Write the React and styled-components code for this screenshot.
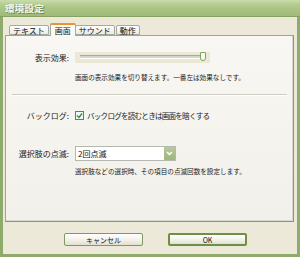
import React from "react";
import styled, { createGlobalStyle } from "styled-components";

const Global = createGlobalStyle`
  html, body { margin: 0; padding: 0; background: #ece9d8; }
  body { font-family: "Noto Sans CJK JP", "Noto Sans", sans-serif; }
`;

const Window = styled.div`
  width: 300px;
  height: 257px;
  box-sizing: border-box;
  display: flex;
  flex-direction: column;
  background: #ece9d8;
  border: 3px solid #8fab6c;
  border-top: none;
  border-bottom-width: 3px;
`;

const TitleBar = styled.div`
  height: 16px;
  margin: 0 -3px;
  padding-left: 5px;
  display: flex;
  align-items: center;
  background: linear-gradient(#c9dcaa 0%, #b3cb8f 30%, #a6c07f 70%, #9fba79 100%);
  border-bottom: 1px solid #86a263;
  color: #f4f7ee;
  font-size: 9.5px;
  font-weight: bold;
  text-shadow: 1px 1px 0 #6f8a52;
  letter-spacing: 0.3px;
`;

const TabRow = styled.div`
  display: flex;
  align-items: flex-end;
  height: 18px;
  padding-left: 6px;
`;

const Tab = styled.div`
  height: ${p => (p.$active ? "13px" : "10px")};
  padding: 0 ${p => (p.$active ? "4px" : "3px")};
  margin: 0 ${p => (p.$active ? "-1px" : "1px")} ${p => (p.$active ? "-1px" : "0")} 0;
  position: relative;
  z-index: ${p => (p.$active ? 2 : 1)};
  display: flex;
  align-items: center;
  font-size: 8px;
  color: #111;
  box-sizing: border-box;
  border: 1px solid #a5a9a0;
  border-bottom: ${p => (p.$active ? "none" : "1px solid #a5a9a0")};
  border-top: ${p => (p.$active ? "2px solid #e8952f" : "1px solid #a5a9a0")};
  background: ${p => (p.$active ? "#fbfbf8" : "linear-gradient(#ffffff, #ebeae3)")};
  border-radius: 2px 2px 0 0;
`;

const Panel = styled.div`
  margin: 0 3px 0 2px;
  height: 187px;
  box-sizing: border-box;
  border: 1px solid #a0a39c;
  border-right-color: #8f928b;
  border-bottom-color: #8f928b;
  background: linear-gradient(#f8f7f3, #f1f0ea);
  box-shadow: inset -1px -1px 0 #d7d5cc;
  display: flex;
  flex-direction: column;
  position: relative;
  z-index: 1;
`;

const Row = styled.div`
  display: flex;
  align-items: center;
  height: ${p => p.$h || 12}px;
  margin-top: ${p => p.$mt || 0}px;
`;

const Label = styled.div`
  width: 63px;
  flex: none;
  text-align: right;
  font-size: 8px;
  color: #222;
  padding-right: 6px;
`;

const Desc = styled.div`
  margin-left: 69px;
  margin-top: ${p => p.$mt || 0}px;
  font-size: 6.6px;
  color: #222;
  line-height: 10px;
  white-space: nowrap;
`;

const SliderBox = styled.div`
  width: 135px;
  height: 11px;
  background: #ebe8d5;
  display: flex;
  align-items: center;
  padding: 0 4px 0 5px;
  box-sizing: border-box;
`;

const Track = styled.div`
  flex: 1;
  height: 2px;
  border-top: 1px solid #a9a79c;
  border-bottom: 1px solid #fff;
  background: #d8d6cc;
  position: relative;
`;

const Thumb = styled.div`
  position: absolute;
  right: 0;
  top: -4px;
  width: 4px;
  height: 7px;
  border: 1px solid #7fa457;
  border-radius: 1px 1px 3px 3px;
  background: #fbfcf7;
`;

const Separator = styled.div`
  margin: ${p => p.$mt}px 6px 0 6px;
  height: 0;
  border-top: 1px solid #cfcdc3;
  border-bottom: 1px solid #ffffff;
`;

const Check = styled.div`
  width: 9px;
  height: 9px;
  box-sizing: border-box;
  border: 1px solid #4f7ab0;
  background: #f2f5f9;
  display: flex;
  align-items: center;
  justify-content: center;
  margin-right: 3px;
`;

const CheckText = styled.div`
  font-size: 7.6px;
  color: #222;
  letter-spacing: -0.8px;
`;

const Select = styled.div`
  width: 101px;
  height: 15px;
  box-sizing: border-box;
  border: 1px solid #b5b8b0;
  background: #fff;
  display: flex;
  align-items: center;
  font-size: 8px;
  color: #111;
  padding-left: 2px;
`;

const SelectValue = styled.div`
  flex: 1;
`;

const SelectButton = styled.div`
  width: 11px;
  height: 13px;
  background: linear-gradient(#b6c99a, #9fb67f);
  display: flex;
  align-items: center;
  justify-content: center;
`;

const Footer = styled.div`
  flex: 1;
  display: flex;
  justify-content: center;
  align-items: flex-start;
  padding-top: 11px;
  padding-left: 11px;
  gap: 25px;
`;

const Button = styled.div`
  width: 79px;
  height: 13px;
  box-sizing: border-box;
  border: ${p => (p.$default ? "2px solid #6e9046" : "1px solid #7f9a5f")};
  border-radius: 2px;
  background: linear-gradient(#ffffff, #f1efe6 60%, #e3e0d2);
  display: flex;
  align-items: center;
  justify-content: center;
  font-size: 7px;
  color: #111;
`;

export default function App() {
  return (
    <>
      <Global />
      <Window>
        <TitleBar>環境設定</TitleBar>
        <TabRow>
          <Tab>テキスト</Tab>
          <Tab $active>画面</Tab>
          <Tab>サウンド</Tab>
          <Tab>動作</Tab>
        </TabRow>
        <Panel>
          <Row $mt={15} $h={12}>
            <Label>表示効果:</Label>
            <SliderBox>
              <Track>
                <Thumb />
              </Track>
            </SliderBox>
          </Row>
          <Desc $mt={9}>画面の表示効果を切り替えます。一番左は効果なしです。</Desc>
          <Separator $mt={12} />
          <Row $mt={14} $h={11}>
            <Label>バックログ:</Label>
            <Check>
              <svg width="7" height="7" viewBox="0 0 7 7">
                <path d="M1 3.5 L3 5.5 L6 1.5" fill="none" stroke="#2f9a2a" strokeWidth="1.4" />
              </svg>
            </Check>
            <CheckText>バックログを読むときは画面を暗くする</CheckText>
          </Row>
          <Row $mt={25} $h={15}>
            <Label>選択肢の点滅:</Label>
            <Select>
              <SelectValue>2回点滅</SelectValue>
              <SelectButton>
                <svg width="7" height="5" viewBox="0 0 7 5">
                  <path d="M1 1 L3.5 3.5 L6 1" fill="none" stroke="#fff" strokeWidth="1.5" />
                </svg>
              </SelectButton>
            </Select>
          </Row>
          <Desc $mt={5}>選択肢などの選択時、その項目の点滅回数を設定します。</Desc>
        </Panel>
        <Footer>
          <Button>キャンセル</Button>
          <Button $default>OK</Button>
        </Footer>
      </Window>
    </>
  );
}
